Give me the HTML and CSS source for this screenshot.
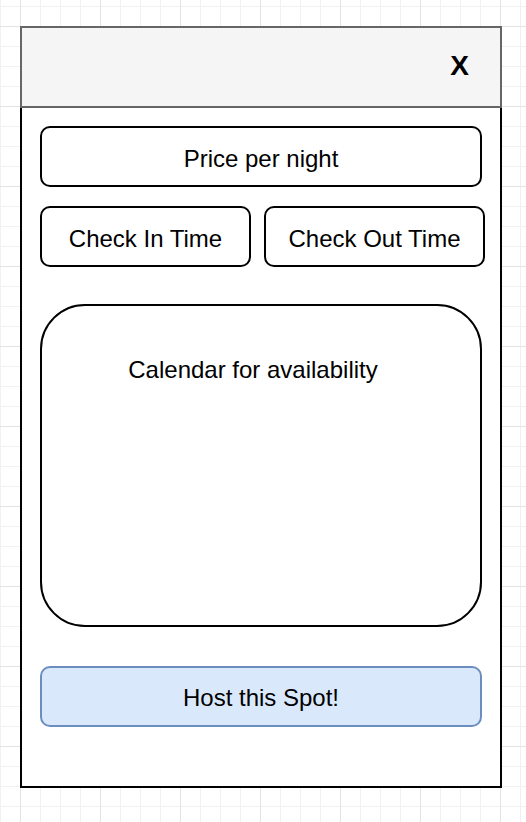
FILE: index.html
```html
<!DOCTYPE html>
<html lang="en">
<head>
  <meta charset="UTF-8">
  <meta name="viewport" content="width=device-width, initial-scale=1.0">
  <title>Host a Spot</title>
  <link rel="stylesheet" href="styles.css">
</head>
<body>

  <div class="frame">
    <div class="frame-header">
      <span class="close">X</span>
    </div>

    <div class="frame-body">
      <div class="box">Price per night</div>

      <div class="time-row">
        <div class="box">Check In Time</div>
        <div class="box">Check Out Time</div>
      </div>

      <div class="calendar">Calendar for availability</div>

      <div class="box host-button">Host this Spot!</div>
    </div>
  </div>

</body>
</html>
```

FILE: styles.css
```css
body {
  margin: 0;
  font-family: "Liberation Sans", Arial, sans-serif;
  background-color: #fff;
  background-image:
    linear-gradient(to right, #e3e3e3 1px, transparent 1px),
    linear-gradient(to bottom, #e3e3e3 1px, transparent 1px),
    linear-gradient(to right, #f1f1f1 1px, transparent 1px),
    linear-gradient(to bottom, #f1f1f1 1px, transparent 1px);
  background-size: 80px 80px, 80px 80px, 20px 20px, 20px 20px;
  background-position: 20px 0, 0 26px, 0 0, 0 6px;
  min-height: 822px;
}

.frame {
  width: 482px;
  margin: 26px 0 0 20px;
}

.frame-header {
  box-sizing: border-box;
  height: 82px;
  background-color: #f5f5f5;
  border: 2px solid #666;
  display: flex;
  justify-content: flex-end;
  align-items: center;
  padding-right: 31px;
}

.close {
  font-size: 28px;
  font-weight: bold;
  line-height: 1;
  margin-top: -3px;
}

.frame-body {
  box-sizing: border-box;
  height: 680px;
  background-color: #fff;
  border: 2px solid #000;
  border-top: none;
  padding: 18px 18px 0 18px;
}

.box {
  box-sizing: border-box;
  height: 61px;
  border: 2px solid #000;
  border-radius: 10px;
  display: flex;
  align-items: center;
  justify-content: center;
  padding-top: 4px;
  font-size: 24px;
  color: #000;
  width: 442px;
}

.time-row {
  display: grid;
  grid-template-columns: 211px 221px;
  gap: 13px;
  margin-top: 19px;
}

.time-row .box {
  width: auto;
}

.calendar {
  box-sizing: border-box;
  width: 442px;
  height: 323px;
  margin-top: 37px;
  border: 2px solid #000;
  border-radius: 45px;
  padding: 50px 16px 0 0;
  text-align: center;
  font-size: 24px;
}

.host-button {
  margin-top: 39px;
  padding-top: 2px;
  background-color: #dae8fc;
  border-color: #6c8ebf;
}
```
